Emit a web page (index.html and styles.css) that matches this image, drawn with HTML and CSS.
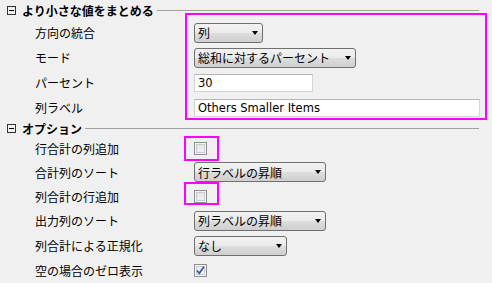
FILE: index.html
```html
<!DOCTYPE html>
<html>
  <head>
    <title>より小さな値をまとめる</title>
    <link rel="stylesheet" href="styles.css">
  </head>
  <body>
    <div class="panel">
      <div class="group">
        <div class="group-head">
          <span class="toggle"></span>
          <span class="group-title">より小さな値をまとめる</span>
          <span class="rule"></span>
        </div>
        <div class="row">
          <span class="label">方向の統合</span>
          <div class="combo w-69"><span>列</span><i class="arrow"></i></div>
        </div>
        <div class="row">
          <span class="label">モード</span>
          <div class="combo w-162"><span>総和に対するパーセント</span><i class="arrow"></i></div>
        </div>
        <div class="row">
          <span class="label">パーセント</span>
          <div class="field w-119">30</div>
        </div>
        <div class="row">
          <span class="label">列ラベル</span>
          <div class="field w-286">Others Smaller Items</div>
        </div>
      </div>

      <div class="group">
        <div class="group-head small">
          <span class="toggle"></span>
          <span class="group-title">オプション</span>
          <span class="rule"></span>
        </div>
        <div class="row r24">
          <span class="label">行合計の列追加</span>
          <span class="check"></span>
        </div>
        <div class="row r24">
          <span class="label">合計列のソート</span>
          <div class="combo w-132"><span>行ラベルの昇順</span><i class="arrow"></i></div>
        </div>
        <div class="row r24">
          <span class="label">列合計の行追加</span>
          <span class="check"></span>
        </div>
        <div class="row">
          <span class="label">出力列のソート</span>
          <div class="combo w-132"><span>列ラベルの昇順</span><i class="arrow"></i></div>
        </div>
        <div class="row">
          <span class="label">列合計による正規化</span>
          <div class="combo w-93"><span>なし</span><i class="arrow"></i></div>
        </div>
        <div class="row r24">
          <span class="label">空の場合のゼロ表示</span>
          <span class="check checked">
            <svg width="9" height="9" viewBox="0 0 9 9"><path d="M1 4.5 L3.3 7.3 L8 0.8" fill="none" stroke="#3a58a8" stroke-width="1.8"/></svg>
          </span>
        </div>
      </div>

      <!-- annotation boxes -->
      <div class="mark mark-1"></div>
      <div class="mark mark-2"></div>
      <div class="mark mark-3"></div>
    </div>
  </body>
</html>
```

FILE: styles.css
```css
html, body {
  margin: 0;
  padding: 0;
  background: #f0f0f0;
}
.panel {
  position: relative;
  width: 492px;
  height: 283px;
  overflow: hidden;
  font-family: "Liberation Sans", "Noto Sans CJK JP", sans-serif;
  font-size: 12px;
  color: #000;
}

.group-head {
  display: flex;
  align-items: center;
  height: 20px;
  padding-left: 7px;
  padding-right: 13px;
}
.group-head.small {
  height: 16px;
}
.toggle {
  position: relative;
  width: 7px;
  height: 7px;
  border: 1px solid #333;
  margin-right: 6px;
  flex: none;
}
.toggle::after {
  content: "";
  position: absolute;
  left: 1px;
  right: 1px;
  top: 3px;
  height: 1px;
  background: #000;
}
.group-title {
  font-weight: bold;
}
.rule {
  flex: 1;
  height: 1px;
  background: #a0a0a0;
  margin-left: 3px;
}

.row {
  display: flex;
  align-items: center;
  height: 25px;
  padding-left: 35px;
}
.row.r24 {
  height: 24px;
}
.label {
  width: 159px;
  flex: none;
}

.combo {
  box-sizing: border-box;
  height: 20px;
  display: flex;
  align-items: center;
  justify-content: space-between;
  padding: 0 4px 0 3px;
  border: 1px solid #707070;
  border-radius: 3px;
  background: linear-gradient(#f2f2f2 0%, #ebebeb 48%, #dddddd 52%, #cfcfcf 100%);
}
.arrow {
  width: 0;
  height: 0;
  border-left: 3.5px solid transparent;
  border-right: 3.5px solid transparent;
  border-top: 4px solid #000;
}
.field {
  box-sizing: border-box;
  height: 18px;
  line-height: 16px;
  padding: 0 3px;
  font-family: "DejaVu Sans", "Noto Sans CJK JP", sans-serif;
  font-size: 11.5px;
  background: #fff;
  border: 1px solid #d5d5d5;
  border-top-color: #b5b5b5;
}

.w-69 { width: 69px; }
.w-93 { width: 93px; }
.w-119 { width: 119px; }
.w-132 { width: 132px; }
.w-162 { width: 162px; }
.w-286 { width: 286px; }

.check {
  box-sizing: border-box;
  width: 13px;
  height: 13px;
  border: 1px solid #8e8f8f;
  background: linear-gradient(135deg, #dcdcdc, #f8f8f8);
  box-shadow: inset 0 0 0 1px #f4f4f4, inset 0 0 0 2px #c8ccd2;
  display: flex;
  align-items: center;
  justify-content: center;
}
.check.checked {
  background: linear-gradient(135deg, #e6e6e6, #fafafa);
}

.mark {
  position: absolute;
  box-sizing: border-box;
  border: 2px solid #ff00ff;
}
.mark-1 { left: 185px; top: 13px; width: 302px; height: 107px; }
.mark-2 { left: 184px; top: 136px; width: 35px; height: 25px; }
.mark-3 { left: 184px; top: 182px; width: 35px; height: 23px; }
```
